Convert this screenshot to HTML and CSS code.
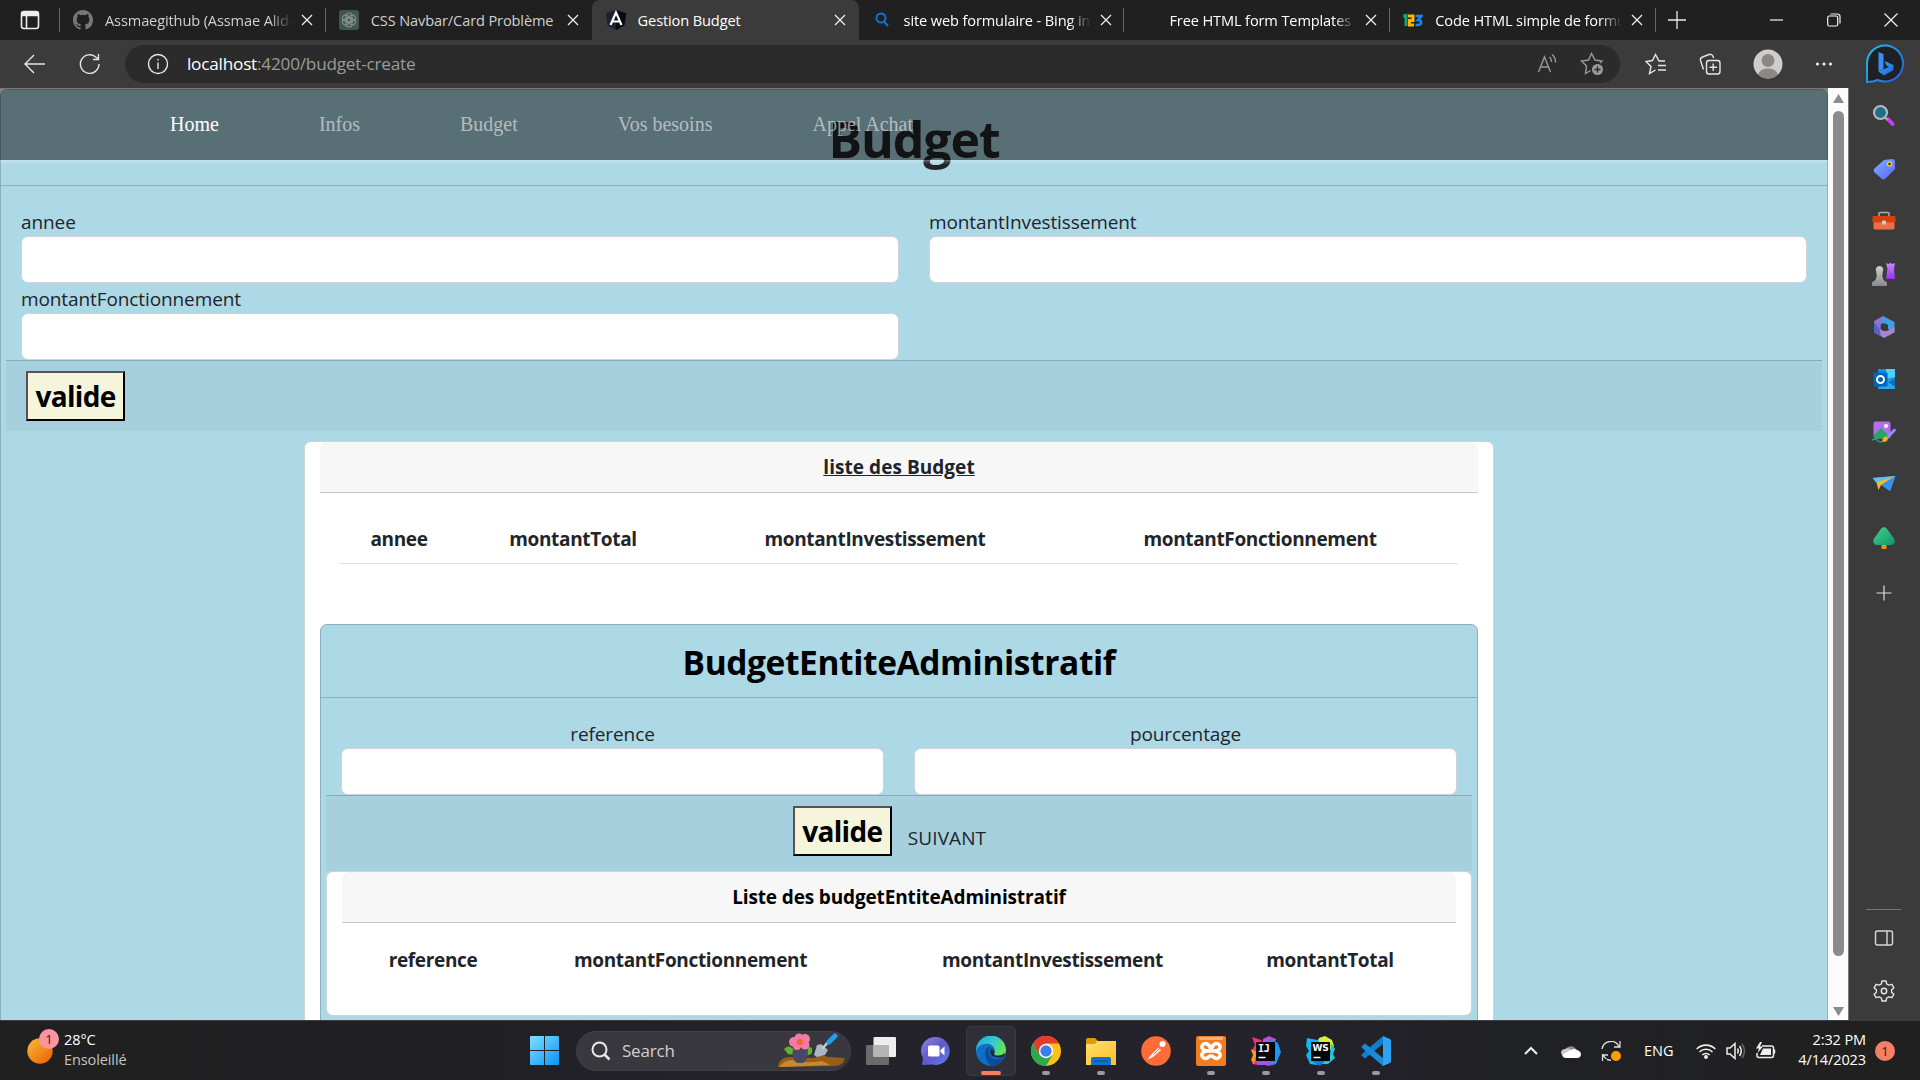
FILE: index.html
```html
<!DOCTYPE html>
<html lang="fr">
<head>
<meta charset="utf-8">
<title>Gestion Budget</title>
<link rel="stylesheet" href="styles.css">
</head>
<body>
<svg width="0" height="0" class="defs">
  <defs>
    <linearGradient id="bingA" x1="0" y1="0" x2="1" y2="1"><stop offset="0" stop-color="#25c4ea"/><stop offset="1" stop-color="#2358e0"/></linearGradient>
    <linearGradient id="tagG" x1="0" y1="0" x2="1" y2="1"><stop offset="0" stop-color="#7cb4ff"/><stop offset="1" stop-color="#5b62f5"/></linearGradient>
    <linearGradient id="purG" x1="0" y1="0" x2="0" y2="1"><stop offset="0" stop-color="#c98bff"/><stop offset="1" stop-color="#9b2ff0"/></linearGradient>
    <linearGradient id="greyG" x1="0" y1="0" x2="0" y2="1"><stop offset="0" stop-color="#cfcfcf"/><stop offset="1" stop-color="#8a8a8a"/></linearGradient>
    <linearGradient id="treeG" x1="0" y1="0" x2="1" y2="1"><stop offset="0" stop-color="#3fd48f"/><stop offset="1" stop-color="#15936a"/></linearGradient>
    <linearGradient id="sunG" x1="0" y1="0" x2="1" y2="1"><stop offset="0" stop-color="#f7bd35"/><stop offset="1" stop-color="#ec5b04"/></linearGradient>
    <linearGradient id="winG" x1="0" y1="0" x2="1" y2="1"><stop offset="0" stop-color="#7fe0ff"/><stop offset="1" stop-color="#0a93f7"/></linearGradient>
    <linearGradient id="chatG" x1="0" y1="0" x2="1" y2="1"><stop offset="0" stop-color="#8f86e8"/><stop offset=".5" stop-color="#5f58c8"/><stop offset="1" stop-color="#5d7ff0"/></linearGradient>
    <linearGradient id="edgeG" x1="0" y1="0" x2="1" y2=".4"><stop offset="0" stop-color="#1ea7e0"/><stop offset=".6" stop-color="#35c8d0"/><stop offset="1" stop-color="#62e25c"/></linearGradient>
    <linearGradient id="foldG" x1="0" y1="0" x2="1" y2="1"><stop offset="0" stop-color="#ffe06b"/><stop offset="1" stop-color="#fcc02b"/></linearGradient>
  </defs>
</svg>

<div class="screen">
  <header class="tabbar">
    <div class="tab-actions">
      <svg width="20" height="20" viewBox="0 0 20 20" fill="none" stroke="#eee" stroke-width="1.6"><rect x="1.5" y="1.5" width="17" height="17" rx="2.5"/><path d="M6.5 6v12"/><path d="M2 4h16" stroke-width="4.5"/></svg>
    </div>
    <div class="tab">
      <svg class="fav" width="20" height="20" viewBox="0 0 16 16" fill="#777"><path d="M8 0C3.58 0 0 3.58 0 8c0 3.54 2.29 6.53 5.47 7.59.4.07.55-.17.55-.38v-1.49c-2.01.37-2.53-.49-2.69-.94-.09-.23-.48-.94-.82-1.13-.28-.15-.68-.52-.01-.53.63-.01 1.08.58 1.23.82.72 1.21 1.87.87 2.33.66.07-.52.28-.87.51-1.07-1.78-.2-3.64-.89-3.64-3.95 0-.87.31-1.59.82-2.15-.08-.2-.36-1.02.08-2.12 0 0 .67-.21 2.2.82a7.6 7.6 0 0 1 4 0c1.53-1.04 2.2-.82 2.2-.82.44 1.1.16 1.92.08 2.12.51.56.82 1.27.82 2.15 0 3.07-1.87 3.75-3.65 3.95.29.25.54.73.54 1.48v2.2c0 .21.15.46.55.38A8 8 0 0 0 16 8c0-4.42-3.58-8-8-8z"/></svg>
      <span class="tab-title fade dim">Assmaegithub (Assmae Alidaoui)</span>
      <svg class="x" viewBox="0 0 12 12"><path d="M1 1l10 10M11 1L1 11"/></svg>
    </div>
    <div class="tab">
      <svg class="fav" width="20" height="20" viewBox="0 0 20 20"><rect width="20" height="20" rx="3" fill="#42564f"/><g fill="none" stroke="#84918c" stroke-width="1.1"><rect x="7" y="3" width="6" height="9" rx="3"/><rect x="7" y="3" width="6" height="9" rx="3" transform="rotate(60 10 10)"/><rect x="7" y="3" width="6" height="9" rx="3" transform="rotate(120 10 10)"/><rect x="7" y="3" width="6" height="9" rx="3" transform="rotate(180 10 10)"/><rect x="7" y="3" width="6" height="9" rx="3" transform="rotate(240 10 10)"/><rect x="7" y="3" width="6" height="9" rx="3" transform="rotate(300 10 10)"/></g></svg>
      <span class="tab-title dim">CSS Navbar/Card Problème</span>
      <svg class="x" viewBox="0 0 12 12"><path d="M1 1l10 10M11 1L1 11"/></svg>
    </div>
    <div class="tab active">
      <svg class="fav" width="20" height="20" viewBox="0 0 20 20"><path d="M10 0l10 3.3-1.5 12L10 20l-8.5-4.7L0 3.3z" fill="#1d2030"/><path d="M10 0l10 3.3-1.5 12L10 20z" fill="#080a12"/><path d="M4.500 15L10 2.500 15.500 15M6.500 11.500h7" fill="none" stroke="#fff" stroke-width="2.200"/></svg>
      <span class="tab-title">Gestion Budget</span>
      <svg class="x" viewBox="0 0 12 12"><path d="M1 1l10 10M11 1L1 11"/></svg>
    </div>
    <div class="tab">
      <svg class="fav" width="20" height="20" viewBox="0 0 20 20" fill="none" stroke="#1473cf" stroke-width="2"><circle cx="9" cy="8" r="4.500"/><path d="M12 11.500l4 4.500"/></svg>
      <span class="tab-title fade">site web formulaire - Bing images</span>
      <svg class="x" viewBox="0 0 12 12"><path d="M1 1l10 10M11 1L1 11"/></svg>
    </div>
    <div class="tab">
      <span class="fav"></span>
      <span class="tab-title fade">Free HTML form Templates Code</span>
      <svg class="x" viewBox="0 0 12 12"><path d="M1 1l10 10M11 1L1 11"/></svg>
    </div>
    <div class="tab">
      <svg class="fav" width="20" height="20" viewBox="0 0 20 20" fill="none" stroke-width="3"><path d="M0 6l3-.5V16" stroke="#12a870"/><path d="M5 6h5v4.500H6.500V15H11" stroke="#ffb500"/><path d="M12.500 6h6l-3.500 4c4 0 4.500 5-.5 5h-2" stroke="#1a86f5" stroke-width="2.600"/></svg>
      <span class="tab-title fade">Code HTML simple de formulaire</span>
      <svg class="x" viewBox="0 0 12 12"><path d="M1 1l10 10M11 1L1 11"/></svg>
    </div>
    <svg class="newtab" width="18" height="18" viewBox="0 0 18 18"><path d="M9 0v18M0 9h18"/></svg>
    <div class="winbtns">
      <svg width="14" height="14" viewBox="0 0 14 14"><path d="M0 7h13"/></svg>
      <svg width="14" height="14" viewBox="0 0 14 14"><rect x=".7" y="3" width="10" height="10" rx="1.500"/><path d="M3.500 1h7a2.500 2.500 0 0 1 2.500 2.500v7"/></svg>
      <svg width="14" height="14" viewBox="0 0 14 14"><path d="M.5.5l13 13M13.500.5l-13 13"/></svg>
    </div>
  </header>

  <div class="toolbar">
    <svg class="back" width="22" height="20" viewBox="0 0 22 20"><path d="M21 10H1.500M10 1L1 10l9 9"/></svg>
    <svg class="reload" width="22" height="22" viewBox="0 0 22 22"><path d="M20 11a9.300 9.300 0 1 1-3-6.800L19.500 6M19.500 1v5.500H14"/></svg>
    <div class="url">
      <svg width="22" height="22" viewBox="0 0 22 22"><circle cx="11" cy="11" r="9.500"/><path d="M11 9.500V16M11 6v1.500"/></svg>
      <span class="address">localhost<span>:4200/budget-create</span></span>
      <svg class="g" width="22" height="22" viewBox="0 0 22 22"><path d="M1.500 19L7.500 4l6 15M3.500 14h8M12.500 4a7 7 0 0 1 2 5M15 1.500a10 10 0 0 1 3.500 8"/></svg>
      <svg class="g star" width="24" height="24" viewBox="0 0 24 24"><path d="M20 11l2-2-7-1-3.500-6.500L8.500 8l-7 1 5 5-1 7.500 5-3"/><circle cx="17.500" cy="17.500" r="5.500" fill="#9a9a9a" stroke="none"/><path d="M17.500 14.500v6M14.500 17.500h6" stroke="#2b2b2b"/></svg>
    </div>
    <div class="tools">
      <svg width="22" height="22" viewBox="0 0 22 22"><path d="M20 8h-6L10.500 1.500 7.500 7.500l-6.500 1 5 5-1.500 7 6-3.500M13 12.500h8M13 17h8"/></svg>
      <svg width="22" height="22" viewBox="0 0 22 22"><rect x="7.500" y="7.500" width="13.500" height="13.500" rx="2.500"/><path d="M14.200 10.500v7.500M10.500 14.200H18M4.500 16.500l-3-9A3 3 0 0 1 3.500 4L10 1.500A3 3 0 0 1 14 3.500l.7 1.500"/></svg>
      <svg class="avatar" width="30" height="30" viewBox="0 0 30 30"><circle cx="15" cy="15" r="14.500" fill="#cfcdca"/><circle cx="15" cy="11.500" r="6.500" fill="#8b8784"/><path d="M5 25.500a10.500 8.500 0 0 1 20 0 14.500 14.500 0 0 1-20 0z" fill="#8b8784"/></svg>
      <svg width="18" height="6" viewBox="0 0 18 6"><g fill="#eee" stroke="none"><circle cx="2.500" cy="3" r="1.600"/><circle cx="9" cy="3" r="1.600"/><circle cx="15.500" cy="3" r="1.600"/></g></svg>
    </div>
    <svg class="bing" width="40" height="40" viewBox="0 0 40 40"><path d="M2 38V19.500A18 18 0 1 1 20 37.500c-3 0-5.500-.5-7.500-1.500C9.500 37.500 6 38 2 38z" fill="#1f2023" stroke="url(#bingA)" stroke-width="2"/><path d="M13.500 8l5 2v15l-5 2.500z" fill="#3b8df5"/><path d="M13.500 27.500l5.500 4 9.500-5.500v-5l-9-4 2 4.500 2.500 1.500z" fill="url(#bingA)"/></svg>
  </div>

  <div class="middle">
    <main class="page">
      <nav class="navbar">
        <a class="on">Home</a><a>Infos</a><a>Budget</a><a>Vos besoins</a><a>Appel Achat</a>
      </nav>
      <section class="card outer">
        <div class="outer-head"><h1>Budget</h1></div>
        <div class="fields">
          <label>annee<span class="input"></span></label>
          <label>montantInvestissement<span class="input"></span></label>
          <label>montantFonctionnement<span class="input"></span></label>
        </div>
        <div class="foot"><button>valide</button></div>
        <section class="panel">
          <div class="panel-head underline">liste des Budget</div>
          <div class="thead t1"><span>annee</span><span>montantTotal</span><span>montantInvestissement</span><span>montantFonctionnement</span></div>
          <section class="card inner">
            <div class="inner-head"><h2>BudgetEntiteAdministratif</h2></div>
            <div class="fields centered">
              <label>reference<span class="input"></span></label>
              <label>pourcentage<span class="input"></span></label>
            </div>
            <div class="foot mid"><button>valide</button><span>SUIVANT</span></div>
            <section class="panel sub">
              <div class="panel-head dark">Liste des budgetEntiteAdministratif</div>
              <div class="thead t2"><span>reference</span><span>montantFonctionnement</span><span>montantInvestissement</span><span>montantTotal</span></div>
            </section>
          </section>
        </section>
      </section>
    </main>
    <div class="scroll">
      <svg width="11" height="9" viewBox="0 0 11 9"><path d="M5.500 0L11 9H0z"/></svg>
      <i></i>
      <svg width="11" height="9" viewBox="0 0 11 9"><path d="M5.500 9L11 0H0z"/></svg>
    </div>
    <aside class="side">
      <div class="side-top">
        <svg viewBox="0 0 24 24"><path d="M16 15l4.500 5" stroke="#c53ef5" stroke-width="4" stroke-linecap="round"/><path d="M12.500 13l3 3" stroke="#aaa" stroke-width="2"/><circle cx="8.500" cy="8.500" r="6.500" fill="#1f6c8f" stroke="#b9b9b9" stroke-width="2.200"/></svg>
        <svg viewBox="0 0 24 24"><path d="M12 3l8-1q3 0 3 3v7L13 22q-2 1-3.500-.5L2 15q-1-2 .5-3.500z" fill="url(#tagG)"/><circle cx="17.500" cy="7" r="2" fill="#223" stroke="#f2cb1d" stroke-width="1.600"/></svg>
        <svg viewBox="0 0 24 24"><path d="M7 7V4.500q0-1 1-1h8q1 0 1 1V7" fill="none" stroke="#aaa" stroke-width="1.500"/><rect x="1.500" y="12" width="21" height="8.500" rx="1.500" fill="#f16d45"/><rect x=".5" y="7" width="23" height="6.500" rx="1" fill="#d4410f"/><circle cx="12" cy="13.500" r="2.200" fill="#ccc"/></svg>
        <svg viewBox="0 0 24 24"><path d="M14 1l2.500 1 2-1 2 1L23 1l-1 6 1 10h-9l1.500-10z" fill="url(#purG)"/><path d="M7.500 4a4 4 0 0 1 3 6.500l.5 1.500-1 1 1.500 5 3.500 2.500V24H0v-3.500L3.500 18 5 13l-1-1 .5-1.500A4 4 0 0 1 7.500 4z" fill="url(#greyG)"/></svg>
        <svg viewBox="0 0 24 24"><path d="M11 1L2 6v11.500l7 3.500V9l5-3z" fill="#8f74cf"/><path d="M11 1l11.500 6v10.500L16 14v-4L8.500 7.500z" fill="#3f9ee6"/><path d="M4.500 18.500L12 23l10.500-5.500V12L15 16l-6-1.500z" fill="#a784cc"/><path d="M2 6.500v11l7 3.500-1.500-7z" fill="#5366c8"/><circle cx="12.300" cy="12.200" r="3.700" fill="#3b3b3b"/></svg>
        <svg viewBox="0 0 24 24"><path d="M6 2h17v20H6z" fill="#1490df"/><path d="M14 2h9v8l-9 2z" fill="#50d0fa"/><path d="M23 11v11H6l8-8z" fill="#28a8ea"/><path d="M23 11v9l-7-5z" fill="#0f6fbf"/><rect x="1.500" y="5.500" width="14" height="14" rx="1" fill="#0364b8"/><circle cx="8.500" cy="12.500" r="3.500" fill="none" stroke="#fff" stroke-width="2"/></svg>
        <svg viewBox="0 0 24 24"><rect x="1.500" y="1.500" width="17" height="17" rx="2" fill="#b56df0"/><circle cx="14" cy="6" r="2" fill="#fff"/><path d="M2 15l7-7 7 7v3.500H2z" fill="#27a567"/><path d="M14.500 16L22 8.500q2 0 2 2L17 18z" fill="#8d8bff"/><path d="M10 22q1-6 5-5.500 2 3-1 5z" fill="#f4b321"/><path d="M0 20q4-2 5 0t5 2" fill="none" stroke="#27a567" stroke-width="1.600"/></svg>
        <svg viewBox="0 0 24 24"><path d="M.5 5L23.500 3 18 18z" fill="#3aa0f2"/><path d="M.5 5l4 5L23.500 3z" fill="#58c4fb"/><path d="M4.500 9.500L23.500 3 9 12l-2.500 5z" fill="#f6bc22"/><path d="M9 12l9 6L23.500 3z" fill="#3b8ff0"/></svg>
        <svg viewBox="0 0 24 24"><rect x="9.500" y="17" width="5" height="6" rx="1" fill="#e8940c"/><path d="M12 1q2 0 3.500 2.500l5 7q3 3 2 6-1 2.500-3.500 2.500H5q-2.500 0-3.500-2.500-1-3 2-6l5-7Q10 1 12 1z" fill="url(#treeG)"/></svg>
        <svg class="plus" viewBox="0 0 24 24"><path d="M12 4.500v15M4.500 12h15" stroke="#ddd" stroke-width="1.200"/></svg>
      </div>
      <div class="side-bottom">
        <hr>
        <svg viewBox="0 0 24 24" fill="none" stroke="#d8d8d8" stroke-width="1.400"><rect x="3.500" y="5" width="17" height="14" rx="2"/><path d="M15 5v14"/></svg>
        <svg viewBox="0 0 24 24" fill="none" stroke="#e4e4e4" stroke-width="1.400" stroke-linejoin="round"><path d="M10 2h4l.7 3 2.200 1.200 3-.9 2 3.500-2.300 2v2.400l2.300 2-2 3.500-3-.9-2.200 1.200-.7 3h-4l-.7-3-2.200-1.200-3 .9-2-3.500 2.300-2v-2.400l-2.300-2 2-3.500 3 .9L9.300 5z"/><circle cx="12" cy="12" r="2.700"/></svg>
      </div>
    </aside>
  </div>

  <footer class="taskbar">
    <div class="weather">
      <div class="sun"><svg width="26" height="26" viewBox="0 0 26 26"><circle cx="13" cy="13" r="12.700" fill="url(#sunG)"/></svg><b>1</b></div>
      <div class="wtext"><span>28°C</span><span class="soft">Ensoleillé</span></div>
    </div>
    <div class="apps">
      <svg class="start" width="29" height="29" viewBox="0 0 29 29"><path d="M0 1q0-1 1-1h13v14H0zM15 0h13q1 0 1 1v13H15zM0 15h14v14H1q-1 0-1-1zM15 15h14v13q0 1-1 1H15z" fill="url(#winG)"/></svg>
      <div class="search">
        <svg width="20" height="20" viewBox="0 0 20 20" fill="none" stroke="#e8e8e8" stroke-width="2"><circle cx="8.500" cy="8.500" r="7"/><path d="M13.500 13.500l5 5" stroke-width="2.600"/></svg>
        <span>Search</span>
        <svg class="flower" width="68" height="36" viewBox="0 0 68 36"><path d="M0 33q2-9 12-9l24 1q8-4 14-1l17 1q-2 9-12 8L0 34z" fill="#9a5d18"/><path d="M2 33q3-5 12-6 12 4 30 1l8 4-50 2z" fill="#c98a2f"/><path d="M6 16q5-6 11 2-1 5-7 3zM34 15q-8-4-9 4 4 6 9 1z" fill="#5cb531"/><path d="M15 16h15q0 11-5 14h-6q-6-4-4-14z" fill="#4a4763"/><g fill="#f27aa4"><circle cx="16" cy="9" r="5"/><circle cx="21" cy="5" r="4.500"/><circle cx="27" cy="6" r="5"/><circle cx="27" cy="12" r="4.500"/><circle cx="19" cy="13" r="4"/></g><circle cx="22" cy="9" r="3" fill="#f3672f"/><path d="M36 22l3-10 4-1 7 6-3 5-8 2z" fill="#a9b6c2"/><path d="M44 16l7-8" stroke="#c5ccd4" stroke-width="2.500"/><path d="M51 9l6-6" stroke="#1fa0ee" stroke-width="5" stroke-linecap="round"/></svg>
      </div>
      <svg class="view" width="30" height="28" viewBox="0 0 30 28"><rect y="8" width="23" height="20" fill="#6b6b6b" rx="1"/><rect x="7.500" width="22.500" height="20" fill="#eee" rx="1"/><path d="M7.500 8H23v12H7.500z" fill="#b5b5b5"/></svg>
      <svg class="chat" width="30" height="30" viewBox="0 0 30 30"><path d="M15 1a14 14 0 1 1-4 27.500L1 29l1-7A14 14 0 0 1 15 1z" fill="url(#chatG)"/><rect x="7" y="9.500" width="11.500" height="11" rx="1.500" fill="#fff"/><path d="M19.500 14l4-3.500v9l-4-3.500z" fill="#fff"/></svg>
      <div class="app current"><svg viewBox="0 0 30 30"><circle cx="15" cy="15" r="15" fill="#0f6fc8"/><path d="M0 15A15 15 0 0 1 30 14q0 6-7 6-5 0-5-2 2-3 0-6Q15 7 9 8q-7 1-9 7z" fill="url(#edgeG)"/><path d="M9 16q1-5 6-5.500Q11 15 14 20t14 2q-4 8-13 8-6-5-6-14z" fill="#0c4c9b"/><path d="M16 12q-4 4 0 8 5 3 12 1l1-4q-4 3-8 2.500-4-.5-2.500-3z" fill="#2b2933"/></svg></div>
      <div class="app"><svg viewBox="0 0 30 30"><circle cx="15" cy="15" r="15" fill="#fbc116"/><path d="M2 7.500L8.500 19 15 22v8A15 15 0 0 1 2 7.500z" fill="#2da94f"/><path d="M2 7.500A15 15 0 0 1 28 7.500H15L8.500 19z" fill="#e33b2e"/><path d="M2 7.500L8.500 19 15 22l6.500-3L15 30A15 15 0 0 1 2 7.500z" fill="#2da94f"/><circle cx="15" cy="15" r="7.200" fill="#fff"/><circle cx="15" cy="15" r="5.700" fill="#3b7ded"/></svg></div>
      <div class="app"><svg viewBox="0 0 30 30"><path d="M0 4q0-2 2-2h7l3 3H0z" fill="#dd9d07"/><path d="M0 5h30v24H0z" fill="url(#foldG)"/><path d="M0 5h11l-2 3H0z" fill="#dd9d07"/><path d="M5 29v-6q0-2 2-2h16q2 0 2 2v6z" fill="#1271c9"/><path d="M8 25h14" stroke="#0a4d90"/></svg></div>
      <div class="app noind"><svg viewBox="0 0 30 30"><circle cx="15" cy="15" r="14.800" fill="#ff6c37"/><path d="M6.500 23.500l3-4 8-8 2.500 2.500-8 7z" fill="#fff"/><circle cx="21.500" cy="8" r="3" fill="#fff"/><path d="M13 18l6-6" stroke="#ff6c37"/></svg></div>
      <div class="app"><svg viewBox="0 0 30 30"><rect width="30" height="30" rx="2" fill="#f27c22"/><rect x="3" y="1" width="24" height="3" rx="1" fill="#f8b27c"/><g fill="none" stroke="#fff" stroke-width="3.600"><path d="M11 15q-6-1-5-5 2-4 6-1.500 3 2.500 3 6.500 0-4 3-6.500 4-2.500 6 1.500 1 4-5 5M11 15q-6 1-5 5 2 4 6 1.500 1-1.500 3-1.500t3 1.500q4 2.500 6-1.500 1-4-5-5M11 15h8"/></g></svg></div>
      <div class="app"><svg viewBox="0 0 30 30"><path d="M1 1l9 3 3 8-6 17-6-1 3-9-4-3 4-7z" fill="#fb2f78"/><path d="M0 13l6 3-3 12-3-4 2-5z" fill="#fc9a20"/><path d="M12 3l6-3 7 3-2 6-12-1z" fill="#c04be0"/><path d="M18 2l9 5 3 9-5 12-8 2-10-4 14-6z" fill="#1b95f5"/><path d="M5 24h12l6 5H7z" fill="#9b57e8"/><rect x="5" y="6" width="19" height="19" fill="#08060a"/><path d="M7.500 21.500h7" stroke="#fff" stroke-width="1.500"/><text x="7" y="15.500" class="ico mono">IJ</text></svg></div>
      <div class="app"><svg viewBox="0 0 30 30"><path d="M1 2l10 2 5-3 3 8-8 20-7-1-4-9 3-4-3-5z" fill="#12b8ee"/><path d="M13 2l6-2 7 4 2 6-3 4H12z" fill="#d9f03a"/><path d="M25 7l4 6-2 5 2 4-7 6H12l12-8z" fill="#22c6dd"/><path d="M5 24h15l-6 6-5-3z" fill="#087bf0"/><rect x="5" y="6" width="19" height="19" fill="#04060a"/><path d="M7.500 21.500h7" stroke="#fff" stroke-width="1.500"/><text x="6.500" y="15" class="ico">WS</text></svg></div>
      <div class="app"><svg viewBox="0 0 30 30"><path d="M22 0v8L4 22.500 1 20q-1-1 0-2z" fill="#0f7fcb"/><path d="M22 30v-8L4 7.500 1 10q-1 1 0 2z" fill="#178bd8"/><path d="M22 0l7 3q1 .5 1 2v20q0 1.500-1 2l-7 3z" fill="#2ba4f3"/></svg></div>
    </div>
    <div class="tray">
      <svg class="chev" width="14" height="9" viewBox="0 0 14 9"><path d="M1 8l6-6 6 6" fill="none" stroke="#eee" stroke-width="2"/></svg>
      <svg class="cloud" width="20" height="14" viewBox="0 0 20 14"><path d="M4 8a6 6 0 0 1 11-3l2 4z" fill="#8f8f8f"/><path d="M4 5q4-2 7 2l-7 5q-4-1-4-4 1-3 4-3z" fill="#c9c9c9"/><path d="M1 11q6-4 9-5 3-2 6 0 4 1 4 4.500-.5 3.500-4 3.500H5q-3 0-4-3z" fill="#fff"/></svg>
      <svg class="sync" width="20" height="20" viewBox="0 0 20 20"><g fill="none" stroke="#ddd" stroke-width="1.300"><path d="M1 8a9 9 0 0 1 17-2.500M19 0v6h-6M5.500 18A9 9 0 0 1 1.500 13M1.500 20v-6H7M6 18.500l4 1"/></g><circle cx="15" cy="15" r="5" fill="#ff9a08"/></svg>
      <span class="lang">ENG</span>
      <svg class="wifi" width="20" height="16" viewBox="0 0 20 16" fill="none" stroke="#eee" stroke-width="1.600"><path d="M.7 6a13 13 0 0 1 18.600 0M3.500 9a9.200 9.200 0 0 1 13 0M6.300 12a5.200 5.200 0 0 1 7.400 0"/><circle cx="10" cy="14" r="1.200" fill="#eee"/></svg>
      <svg class="vol" width="20" height="18" viewBox="0 0 20 18" fill="none" stroke="#eee" stroke-width="1.500"><path d="M1 6h3l5-4.500v15L4 12H1zM11.500 6.500q1.500 2.500 0 5M13.500 4q3.500 5 0 10"/><path d="M16 2q5 7 0 14" stroke="#666"/></svg>
      <svg class="bat" width="20" height="17" viewBox="0 0 20 17" fill="none" stroke="#eee" stroke-width="1.500"><path d="M6 4h9.500q2 0 2 2v7.500q0 2-2 2H3q-2 0-2-2V11M18.500 7.500v4"/><path d="M7 6.500h8v6.500H4z" fill="#eee" stroke="none"/><path d="M4 0L0 6.500h3L1.500 11 7 4.500H4L6 0z" fill="#eee" stroke="none"/></svg>
      <div class="clock"><span>2:32 PM</span><span>4/14/2023</span></div>
      <b class="badge">1</b>
    </div>
  </footer>
</div>
</body>
</html>
```
FILE: styles.css
```css
* { box-sizing: border-box; }
body { margin: 0; font-family: "Open Sans", "Noto Sans", sans-serif; overflow: hidden; }
svg { flex: none; display: block; }
.defs { position: absolute; }
.screen { width: 1920px; height: 1080px; display: flex; flex-direction: column; background: #3b3b3b; overflow: hidden; }

/* Browser tabs */
.tabbar { height: 40px; background: #202020; display: flex; align-items: center; flex: none; color: #fff; }
.tab-actions { width: 60px; height: 24px; display: flex; align-items: center; padding-left: 20px; border-right: 1px solid #666; }
.tab { width: 265.8px; height: 24px; display: flex; align-items: center; padding: 0 13px; border-right: 1px solid #666; flex: none; }
.tab:nth-child(3) { border-right-color: transparent; }
.tab.active { width: 267px; height: 40px; background: #3b3b3b; border: 0; border-radius: 8px 8px 0 0; padding-left: 14px; }
.fav { width: 20px; flex: none; }
.tab-title { width: 187px; margin-left: 12px; margin-bottom: 1px; font-size: 14.6px; letter-spacing: -.13px; white-space: nowrap; overflow: hidden; flex: none; }
.tab-title.dim { color: #cfcfcf; }
.tab-title.fade { -webkit-mask-image: linear-gradient(90deg, #000 165px, transparent 187px); mask-image: linear-gradient(90deg, #000 165px, transparent 187px); }
.x { width: 12px; height: 12px; margin-left: 9px; }
.x path, .newtab path { stroke: #ececec; stroke-width: 1.3; fill: none; }
.newtab { margin-left: 12px; }
.winbtns { margin-left: auto; padding-right: 22px; display: flex; gap: 43px; }
.winbtns path, .winbtns rect { stroke: #f2f2f2; stroke-width: 1.2; fill: none; }

/* Address bar */
.toolbar { height: 48px; display: flex; align-items: center; flex: none; }
.toolbar svg { fill: none; stroke: #e6e6e6; stroke-width: 1.4; }
.back { margin-left: 24px; }
.reload { margin-left: 33px; }
.url { width: 1495px; height: 38px; border-radius: 19px; background: #2b2b2b; margin-left: 24px; display: flex; align-items: center; padding: 0 16px 0 22px; }
.address { color: #fff; font-size: 17.2px; letter-spacing: -.22px; margin: 0 auto 2px 18px; }
.address span { color: #9b9b9b; }
.toolbar .g { stroke: #999; }
.star { margin-left: 21px; }
.tools { display: flex; align-items: center; gap: 32px; margin-left: 25px; }
.toolbar .avatar, .toolbar .bing { stroke: none; }
.bing { margin-left: auto; margin-right: 15px; }

/* Web page viewport */
.middle { flex: 1; display: flex; min-height: 0; }
.page { position: relative; width: 1828px; overflow: hidden; background: #fff; font-size: 19px; color: #212529; letter-spacing: -.1px; border-top: 1px solid #777; }
.navbar { position: absolute; z-index: 2; top: 0; left: 0; width: 100%; height: 71px; background: rgba(0, 0, 0, .485); box-shadow: 0 1px 4px rgba(255, 255, 255, .5); display: flex; align-items: center; padding-left: 170px; gap: 100px; font: 20px "Liberation Serif", serif; letter-spacing: 0; color: rgba(255, 255, 255, .55); }
.navbar .on { color: #fff; }
.card { background: #add8e6; border: 1px solid #8cb1be; border-radius: 7px; }
.outer { height: 1200px; }
.outer-head { height: 96px; border-bottom: 1px solid #8cb1be; text-align: center; padding-top: 15px; }
h1, h2 { margin: 0; font-weight: 700; }
h1 { font-size: 50px; line-height: 68px; letter-spacing: -1.1px; }
.fields { display: grid; grid-template-columns: 1fr 1fr; column-gap: 30px; padding: 20px 20px 0; }
.fields label { display: block; line-height: 32px; height: 77px; }
.input { display: block; height: 47px; border: 1px solid #ced4da; border-radius: 7px; background: #fff; margin-top: -2px; }
.foot { height: 71px; margin: 0 5px; background: #a6d0de; border-top: 1px solid #86aab7; display: flex; align-items: flex-start; padding: 10px 20px; }
button { width: 99px; height: 50px; padding: 0; font: 700 28px "Open Sans", sans-serif; letter-spacing: -.7px; background: beige; border: 2px outset #000; color: #000; }
.outer > .fields { height: 174px; }
.panel { width: 1190px; height: 700px; background: #fff; border: 1px solid #cfd4d6; border-radius: 7px; margin: 10px 0 0 303px; padding: 0 15px; }
.panel-head { height: 51px; background: #f7f7f7; border-bottom: 1px solid #c8c8c8; border-radius: 7px 7px 0 0; text-align: center; line-height: 51px; font-weight: 700; letter-spacing: -.14px; }
.underline { text-decoration: underline; letter-spacing: .05px; }
.dark { color: #000; }
.thead { display: grid; text-align: center; font-weight: 700; letter-spacing: -.35px; }
.t1 { grid-template-columns: 120px 228px 376px 394px; margin: 20px 20px 0 19px; height: 51px; line-height: 52px; border-bottom: 1px solid #dee2e6; }
.t2 { grid-template-columns: 124px 391px 333px 222px; margin: 12px 0 0 29px; line-height: 50px; }
.inner { margin: 60px 0 0; height: 420px; }
.inner-head { height: 73px; border-bottom: 1px solid #8cb1be; text-align: center; color: #000; }
h2 { font-size: 33.5px; line-height: 74px; letter-spacing: -.4px; }
.inner .fields { padding-top: 20px; height: 97px; text-align: center; }
.foot.mid { justify-content: center; gap: 16px; height: 76px; padding: 10px 19px 0 0; }
.foot.mid span { line-height: 44px; margin-top: 10px; letter-spacing: .1px; }
.sub { width: auto; height: 145px; margin: 0 5px; padding: 0 15px; }

/* Scrollbar */
.scroll { width: 21px; background: #fcfcfc; border-right: 1px solid #777; display: flex; flex-direction: column; align-items: center; padding: 6px 0 4px; }
.scroll svg { fill: #8b8b8b; }
.scroll i { width: 11px; height: 845px; border-radius: 6px; background: #8b8b8b; margin: 8px 0 auto; }

/* Edge side panel */
.side { flex: 1; display: flex; flex-direction: column; justify-content: space-between; align-items: center; padding-right: 2px; }
.side svg { width: 24px; height: 24px; fill: none; }
.side-top { display: flex; flex-direction: column; gap: 28.7px; padding-top: 16px; }
.side-top .plus { margin-top: 3px; }
.side-bottom { display: flex; flex-direction: column; align-items: center; gap: 29px; padding-bottom: 17px; }
.side-bottom hr { width: 35px; border: 0; border-top: 1px solid #777; margin: 0 0 -13px; }

/* Taskbar */
.taskbar { height: 60px; flex: none; background: linear-gradient(90deg, #202020 0, #202024 25%, #24222b 40%, #24222b 65%, #202124 80%, #202020); border-top: 1px solid #3a3c3e; color: #fff; display: flex; align-items: center; font-size: 14.5px; }
.weather { width: 530px; display: flex; align-items: center; padding-left: 27px; gap: 11px; }
.sun { position: relative; width: 26px; }
.sun b, .badge { width: 20px; height: 20px; border-radius: 50%; font-size: 13px; font-weight: 400; line-height: 20px; text-align: center; color: #222; }
.sun b { position: absolute; left: 12px; top: -9px; background: #fb94a1; }
.badge { background: #f67e64; margin-left: 9px; }
.wtext, .clock { display: flex; flex-direction: column; line-height: 20px; letter-spacing: -.1px; padding-bottom: 2px; }
.soft { color: #c4c4c4; }
.apps { display: flex; align-items: center; }
.search { width: 275px; height: 40px; border-radius: 20px; background: #39383e; margin-left: 17px; display: flex; align-items: center; padding-left: 14px; font-size: 17px; color: #cfcfcf; border: 1px solid #424147; letter-spacing: -.2px; }
.search span { margin-left: 11px; margin-bottom: 1px; }
.flower { margin-left: auto; margin-right: 4px; }
.view { margin-left: 15px; }
.chat { margin: 0 15px 0 25px; }
.app { width: 50px; height: 50px; margin-right: 5px; border-radius: 5px; display: flex; flex-direction: column; align-items: center; padding-top: 9px; border: 1px solid transparent; }
.app svg { width: 30px; height: 30px; }
.app::after { content: ""; width: 8px; height: 4px; border-radius: 2px; background: #9a999d; margin-top: 5px; }
.noind::after { display: none; }
.current { background: #302e38; border-color: #3b3943; }
.current::after { width: 20px; background: #f67e64; }
.ico { font: 700 9px "DejaVu Sans", sans-serif; letter-spacing: -.3px; fill: #fff; }
.mono { font-family: "DejaVu Sans Mono", monospace; font-size: 10px; }
.tray { display: flex; align-items: center; margin-left: auto; padding-right: 25px; }
.cloud { margin-left: 23px; }
.sync { margin-left: 20px; }
.lang { width: 29px; margin-left: 23px; }
.wifi { margin-left: 23px; }
.vol, .bat { margin-left: 10px; }
.clock { width: 80px; margin-left: 10px; text-align: right; }
```
